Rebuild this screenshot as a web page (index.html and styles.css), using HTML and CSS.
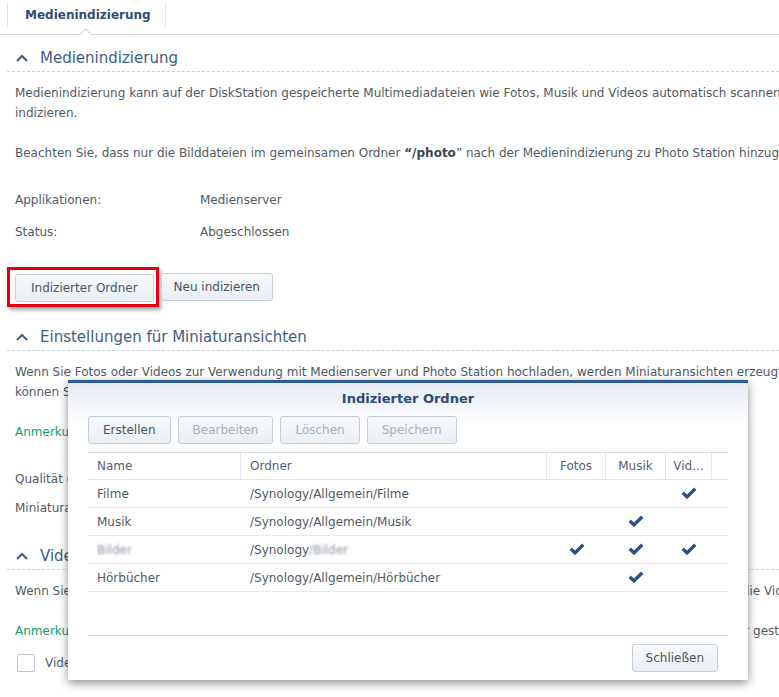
FILE: index.html
```html
<!DOCTYPE html>
<html lang="de">
<head>
<meta charset="utf-8">
<title>Medienindizierung</title>
<link rel="stylesheet" href="styles.css">
</head>
<body>
<div class="page">
  <div class="tabbar">
    <div class="tab">Medienindizierung</div>
  </div>

  <div class="section-head">
    <svg class="chev" width="12" height="8" viewBox="0 0 12 8"><polyline points="1,7 6,2 11,7" fill="none" stroke="#3e5e8a" stroke-width="2"/></svg>
    <span>Medienindizierung</span>
  </div>
  <p class="text">Medienindizierung kann auf der DiskStation gespeicherte Multimediadateien wie Fotos, Musik und Videos automatisch scannen und<br>indizieren.</p>
  <p class="text gap">Beachten Sie, dass nur die Bilddateien im gemeinsamen Ordner <b class="strong">“/photo</b>” nach der Medienindizierung zu Photo Station hinzugefügt werden.</p>
  <div class="rows rows-32">
    <div class="row"><span class="label">Applikationen:</span><span>Medienserver</span></div>
    <div class="row"><span class="label">Status:</span><span>Abgeschlossen</span></div>
  </div>
  <div class="actions">
    <div class="highlight"><button class="btn">Indizierter Ordner</button></div>
    <button class="btn btn-next">Neu indizieren</button>
  </div>

  <div class="section-head s2">
    <svg class="chev" width="12" height="8" viewBox="0 0 12 8"><polyline points="1,7 6,2 11,7" fill="none" stroke="#3e5e8a" stroke-width="2"/></svg>
    <span>Einstellungen für Miniaturansichten</span>
  </div>
  <p class="text">Wenn Sie Fotos oder Videos zur Verwendung mit Medienserver und Photo Station hochladen, werden Miniaturansichten erzeugt. Sie<br>können Sie die Qualität der Miniaturansichten hier anpassen.</p>
  <p class="text gap"><span class="note">Anmerkung:</span> Eine höhere Qualität benötigt mehr Zeit.</p>
  <div class="rows rows-29">
    <div class="row"><span class="label">Qualität der Miniaturansichten:</span><span>Normal</span></div>
    <div class="row"><span class="label">Miniaturansichten erzeugen:</span><span>Aktiviert</span></div>
  </div>

  <div class="section-head s3">
    <svg class="chev" width="12" height="8" viewBox="0 0 12 8"><polyline points="1,7 6,2 11,7" fill="none" stroke="#3e5e8a" stroke-width="2"/></svg>
    <span>Videokonvertierung</span>
  </div>
  <p class="text">Wenn Sie Videos hochladen, konvertiert das System diese in ein passendes Format, für mobile Geräte, damit Sie überall die Videos abspielen können.</p>
  <p class="text gap"><span class="note">Anmerkung:</span> Eine Konvertierung kann mehr Zeit in Anspruch nehmen, wenn zu viele Videos gleichzeitig hochgeladen oder gestreamt werden.</p>
  <div class="check-row">
    <span class="checkbox"></span>
    <span>Videos automatisch konvertieren</span>
  </div>

  <div class="dialog">
    <div class="dlg-title">Indizierter Ordner</div>
    <div class="toolbar">
      <button class="btn">Erstellen</button>
      <button class="btn" disabled>Bearbeiten</button>
      <button class="btn" disabled>Löschen</button>
      <button class="btn" disabled>Speichern</button>
    </div>
    <div class="grid">
      <div class="tr head">
        <div class="th">Name</div>
        <div class="th">Ordner</div>
        <div class="th center">Fotos</div>
        <div class="th center">Musik</div>
        <div class="th center">Vid...</div>
        <div class="th last"></div>
      </div>
      <div class="tr">
        <div class="td">Filme</div>
        <div class="td">/Synology/Allgemein/Filme</div>
        <div class="td center"></div>
        <div class="td center"></div>
        <div class="td center"><svg class="tick" width="16" height="13" viewBox="0 0 16 13"><path d="M0.6 6.9 L2.9 4.6 L6 7.6 L13.1 0.6 L15.4 2.9 L6 12.3 Z"/></svg></div>
        <div class="td"></div>
      </div>
      <div class="tr">
        <div class="td">Musik</div>
        <div class="td">/Synology/Allgemein/Musik</div>
        <div class="td center"></div>
        <div class="td center"><svg class="tick" width="16" height="13" viewBox="0 0 16 13"><path d="M0.6 6.9 L2.9 4.6 L6 7.6 L13.1 0.6 L15.4 2.9 L6 12.3 Z"/></svg></div>
        <div class="td center"></div>
        <div class="td"></div>
      </div>
      <div class="tr">
        <div class="td"><span class="blur">Bilder</span></div>
        <div class="td">/Synology<span class="blur">/Bilder</span></div>
        <div class="td center"><svg class="tick" width="16" height="13" viewBox="0 0 16 13"><path d="M0.6 6.9 L2.9 4.6 L6 7.6 L13.1 0.6 L15.4 2.9 L6 12.3 Z"/></svg></div>
        <div class="td center"><svg class="tick" width="16" height="13" viewBox="0 0 16 13"><path d="M0.6 6.9 L2.9 4.6 L6 7.6 L13.1 0.6 L15.4 2.9 L6 12.3 Z"/></svg></div>
        <div class="td center"><svg class="tick" width="16" height="13" viewBox="0 0 16 13"><path d="M0.6 6.9 L2.9 4.6 L6 7.6 L13.1 0.6 L15.4 2.9 L6 12.3 Z"/></svg></div>
        <div class="td"></div>
      </div>
      <div class="tr">
        <div class="td">Hörbücher</div>
        <div class="td">/Synology/Allgemein/Hörbücher</div>
        <div class="td center"></div>
        <div class="td center"><svg class="tick" width="16" height="13" viewBox="0 0 16 13"><path d="M0.6 6.9 L2.9 4.6 L6 7.6 L13.1 0.6 L15.4 2.9 L6 12.3 Z"/></svg></div>
        <div class="td center"></div>
        <div class="td"></div>
      </div>
    </div>
    <div class="dlg-foot">
      <button class="btn btn-close">Schließen</button>
    </div>
  </div>
</div>
</body>
</html>
```

FILE: styles.css
```css
* { box-sizing: border-box; }
html, body { margin: 0; padding: 0; }
body {
  font-family: "DejaVu Sans", Verdana, sans-serif;
  font-size: 12px;
  color: #505a64;
  background: #fff;
}
.page {
  position: relative;
  width: 779px;
  height: 697px;
  overflow: hidden;
}

/* tab bar */
.tabbar {
  height: 35px;
  border-bottom: 1px solid #cfd6de;
  display: flex;
  align-items: flex-start;
}
.tab {
  position: relative;
  margin: 4px 0 0 7px;
  height: 23px;
  line-height: 23px;
  padding: 0 14px 0 17px;
  border-left: 1px solid #dfe4ea;
  border-right: 1px solid #dfe4ea;
  font-weight: bold;
  color: #2f4c73;
}
.tab::after {
  content: "";
  position: absolute;
  left: 73px;
  top: 26px;
  width: 8px;
  height: 8px;
  background: #fff;
  border-top: 1px solid #cfd6de;
  border-left: 1px solid #cfd6de;
  transform: rotate(45deg);
}

/* section headers */
.section-head {
  margin: 9px 0 0 7px;
  height: 28px;
  border-bottom: 1px dashed #c9d3de;
  display: flex;
  align-items: center;
  padding-left: 9px;
  color: #3e5e8a;
  font-size: 15px;
  white-space: nowrap;
}
.section-head .chev { margin-right: 12px; flex: none; }
.section-head.s2 { margin-top: 16px; }
.section-head.s3 { margin-top: 20px; }

.text {
  margin: 11px 0 0 15px;
  line-height: 20px;
  white-space: nowrap;
}
.text.gap { margin-top: 20px; }
.strong { color: #3d4650; }
.note { color: #0f9c72; }

.rows { margin-top: 21px; }
.rows-29 { margin-top: 22px; }
.row {
  display: flex;
  align-items: center;
  height: 32px;
  padding-left: 15px;
  white-space: nowrap;
}
.rows-29 .row { height: 29px; }
.row .label { width: 185px; flex: none; }

/* buttons */
.btn {
  height: 28px;
  padding: 0 14px;
  border: 1px solid #c5cfda;
  border-radius: 3px;
  background: linear-gradient(#f8fafc, #e9eef4);
  color: #4b5563;
  font: inherit;
  line-height: 26px;
  white-space: nowrap;
}
.btn[disabled] { color: #a7b0bb; }

.actions {
  margin-top: 19px;
  padding-left: 7px;
  display: flex;
  align-items: center;
}
.highlight {
  display: flex;
  border: 3px solid #e3000f;
  padding: 4px 2px 2px 5px;
  box-shadow: 2px 3px 4px rgba(0, 0, 0, 0.35);
}
.actions .btn { padding: 0 15px; }
.actions .btn-next { margin-left: 2px; padding: 0 12px; }

.check-row {
  margin: 13px 0 0 17px;
  display: flex;
  align-items: center;
  gap: 10px;
  height: 18px;
  white-space: nowrap;
}
.checkbox {
  width: 18px;
  height: 18px;
  border: 1px solid #b9c4d0;
  border-radius: 2px;
  background: #fff;
  flex: none;
}

/* dialog */
.dialog {
  position: absolute;
  left: 68px;
  top: 380px;
  width: 680px;
  height: 300px;
  background: linear-gradient(#e4eaf2 0, #ffffff 42px, #ffffff 100%);
  border-top: 3px solid #2d5b91;
  box-shadow: 0 3px 9px rgba(0, 0, 0, 0.45);
  display: flex;
  flex-direction: column;
}
.dlg-title {
  height: 26px;
  padding-top: 6px;
  line-height: 20px;
  text-align: center;
  font-weight: bold;
  font-size: 13px;
  color: #2c4b75;
}
.toolbar {
  margin-top: 7px;
  padding: 0 20px;
  display: flex;
  gap: 7px;
}
.grid {
  margin: 8px 20px 0;
  height: 184px;
  border-top: 1px solid #d8e0e9;
  border-bottom: 1px solid #d3dae3;
}
.tr {
  display: grid;
  grid-template-columns: 153px 306px 59px 60px 46px 16px;
  height: 28px;
  border-bottom: 1px solid #e6ebf0;
  white-space: nowrap;
}
.tr.head { height: 27px; border-bottom-color: #dde4ec; }
.th, .td {
  display: flex;
  align-items: center;
  padding-left: 9px;
  overflow: hidden;
}
.th {
  border-right: 1px solid #dfe6ee;
  color: #526079;
}
.th.last { border-right: none; }
.th.center, .td.center { justify-content: center; padding-left: 0; }
.tick { fill: #2e5283; display: block; }
.blur {
  color: #8a939d;
  filter: blur(1.2px);
}
.dlg-foot {
  margin-top: auto;
  padding: 0 30px 8px 0;
  display: flex;
  justify-content: flex-end;
}
.btn-close { padding: 0 13px; }
```
